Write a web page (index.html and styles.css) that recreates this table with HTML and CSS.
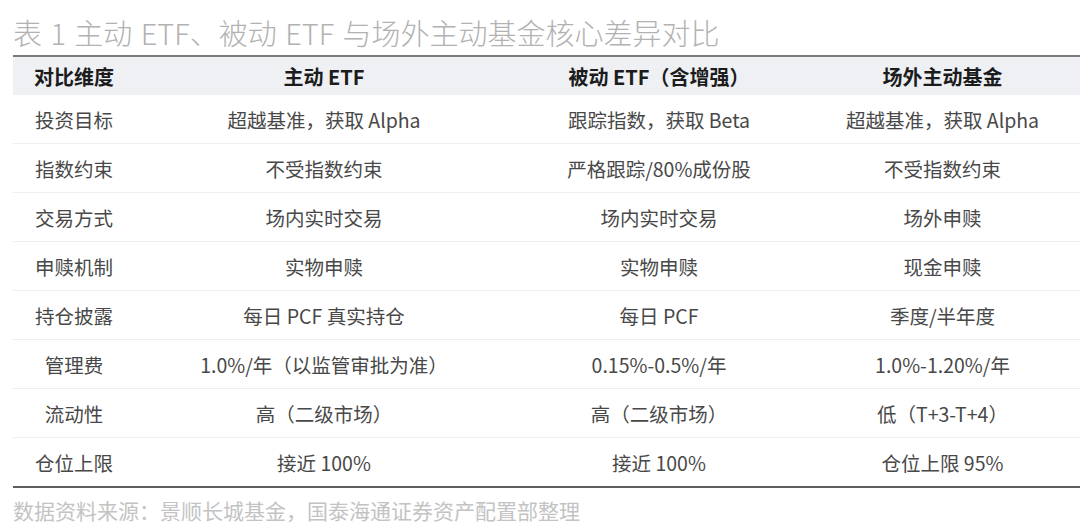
FILE: index.html
```html
<!DOCTYPE html>
<html lang="zh-CN">
<head>
<meta charset="utf-8">
<title>表 1 主动 ETF、被动 ETF 与场外主动基金核心差异对比</title>
<link rel="stylesheet" href="styles.css">
</head>
<body>
<div class="page">
  <h1 class="title">表 1 主动 ETF、被动 ETF 与场外主动基金核心差异对比</h1>
  <div class="table">
    <div class="row head">
      <div class="cell">对比维度</div>
      <div class="cell">主动 ETF</div>
      <div class="cell">被动 ETF（含增强）</div>
      <div class="cell">场外主动基金</div>
    </div>
    <div class="row">
      <div class="cell">投资目标</div>
      <div class="cell">超越基准，获取 Alpha</div>
      <div class="cell">跟踪指数，获取 Beta</div>
      <div class="cell">超越基准，获取 Alpha</div>
    </div>
    <div class="row">
      <div class="cell">指数约束</div>
      <div class="cell">不受指数约束</div>
      <div class="cell">严格跟踪/80%成份股</div>
      <div class="cell">不受指数约束</div>
    </div>
    <div class="row">
      <div class="cell">交易方式</div>
      <div class="cell">场内实时交易</div>
      <div class="cell">场内实时交易</div>
      <div class="cell">场外申赎</div>
    </div>
    <div class="row">
      <div class="cell">申赎机制</div>
      <div class="cell">实物申赎</div>
      <div class="cell">实物申赎</div>
      <div class="cell">现金申赎</div>
    </div>
    <div class="row">
      <div class="cell">持仓披露</div>
      <div class="cell">每日 PCF 真实持仓</div>
      <div class="cell">每日 PCF</div>
      <div class="cell">季度/半年度</div>
    </div>
    <div class="row">
      <div class="cell">管理费</div>
      <div class="cell">1.0%/年（以监管审批为准）</div>
      <div class="cell">0.15%-0.5%/年</div>
      <div class="cell">1.0%-1.20%/年</div>
    </div>
    <div class="row">
      <div class="cell">流动性</div>
      <div class="cell">高（二级市场）</div>
      <div class="cell">高（二级市场）</div>
      <div class="cell">低（T+3-T+4）</div>
    </div>
    <div class="row">
      <div class="cell">仓位上限</div>
      <div class="cell">接近 100%</div>
      <div class="cell">接近 100%</div>
      <div class="cell">仓位上限 95%</div>
    </div>
  </div>
  <p class="source">数据资料来源：景顺长城基金，国泰海通证券资产配置部整理</p>
</div>
</body>
</html>
```

FILE: styles.css
```css
html, body {
  margin: 0;
  padding: 0;
  background: #ffffff;
}

body {
  font-family: "Noto Sans CJK SC", "Noto Sans", sans-serif;
  width: 1080px;
  height: 532px;
  overflow: hidden;
}

.page {
  padding-left: 13px;
}

.title {
  margin: 0;
  padding-top: 15px;
  height: 40px;
  font-size: 29px;
  line-height: 34px;
  font-weight: 300;
  word-spacing: 2px;
  color: #b2b2b2;
  white-space: nowrap;
}

.table {
  border-top: 2px solid #7a7a7a;
  border-bottom: 2px solid #5e5e5e;
}

.row {
  display: grid;
  grid-template-columns: 122px 378px 292px 275px;
  height: 48px;
  border-bottom: 1px solid #efefef;
  align-items: center;
  font-size: 19.5px;
  color: #484848;
}

.row:last-child {
  border-bottom: none;
}

.row.head {
  height: 38px;
  border-bottom: none;
  background: #eef0f4;
  color: #1c1c1c;
  font-size: 20px;
  font-weight: 700;
}

.cell {
  text-align: center;
  white-space: nowrap;
}

.source {
  margin: 0;
  padding-top: 8px;
  font-size: 21px;
  line-height: 28px;
  color: #c3c3c3;
  white-space: nowrap;
}
```
